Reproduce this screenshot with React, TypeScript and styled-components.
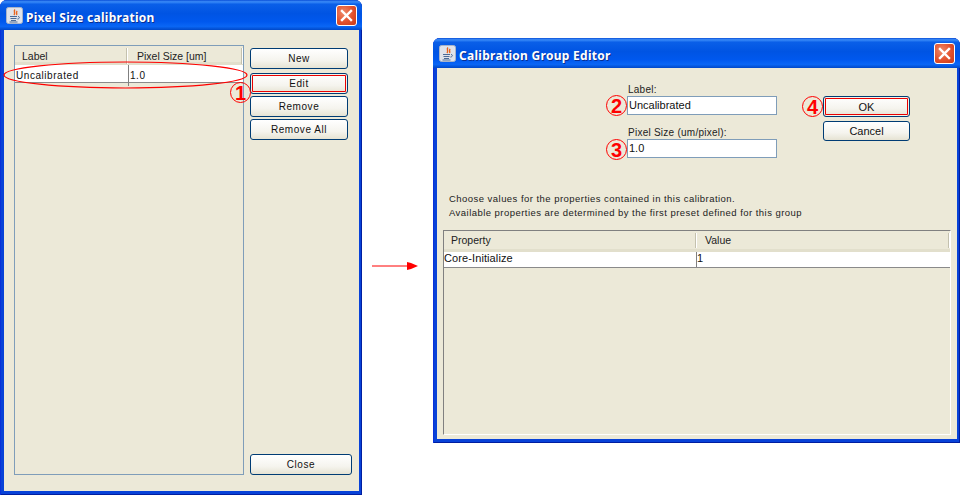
import React from "react";
import styled, { createGlobalStyle } from "styled-components";

const Global = createGlobalStyle`
  html, body { margin: 0; padding: 0; background: #fff; }
  body { font-family: "Liberation Sans", Arial, sans-serif; width: 961px; height: 495px; overflow: hidden; }
`;

const Page = styled.div`
  display: flex;
  align-items: flex-start;
  width: 961px;
  height: 495px;
  overflow: hidden;
`;

const Window = styled.div<{ $w: number; $h: number; $top?: number }>`
  position: relative;
  flex: none;
  box-sizing: border-box;
  width: ${(p) => p.$w}px;
  height: ${(p) => p.$h}px;
  margin-top: ${(p) => p.$top ?? 0}px;
  display: flex;
  flex-direction: column;
  padding: 0 3px 4px 4px;
  border-radius: 7px 7px 0 0;
  background: #0842d8;
  box-shadow: inset 1px 0 #0831d9, inset -1px 0 #001ea0, inset 0 -1px #001ea0;
`;

const TitleBar = styled.div`
  flex: none;
  height: 30px;
  margin: 0 -3px 0 -4px;
  padding: 0 5px 0 6px;
  border-radius: 7px 7px 0 0;
  display: flex;
  align-items: center;
  background: linear-gradient(180deg, #0a4fd8 0%, #3b8cf8 6%, #0a5fe8 14%, #0054e3 45%, #0058ee 72%, #0a66f5 88%, #0048c8 100%);
`;

const TitleText = styled.span`
  margin-left: 3px;
  padding-top: 4px;
  color: #fff;
  font-family: "Noto Sans", sans-serif;
  font-weight: 700;
  font-size: 12px;
  letter-spacing: 0.28px;
  text-shadow: 1px 1px 0 #0a2f90;
  white-space: nowrap;
`;

const CloseBtn = styled.div`
  margin-left: auto;
  width: 21px;
  height: 21px;
  box-sizing: border-box;
  border: 1px solid #fff;
  border-radius: 3px;
  background: radial-gradient(circle at 35% 35%, #ee8a6a, #e2502c 55%, #c63a18);
  display: flex;
  align-items: center;
  justify-content: center;
`;

const Body = styled.div`
  flex: 1;
  min-height: 0;
  background: #ece9d8;
  display: flex;
`;

const LeftBody = styled(Body)`
  padding: 15px 0 16px 10px;
`;

const RightBody = styled(Body)`
  flex-direction: column;
`;

const TableFrame = styled.div<{ $w: number; $h: number; $sunken?: boolean }>`
  flex: none;
  box-sizing: border-box;
  width: ${(p) => p.$w}px;
  height: ${(p) => p.$h}px;
  border: 1px solid ${(p) => (p.$sunken ? "#808080" : "#7f9db9")};
  border-right-color: ${(p) => (p.$sunken ? "#fff" : "#7f9db9")};
  border-bottom-color: ${(p) => (p.$sunken ? "#fff" : "#7f9db9")};
`;

const HeaderRow = styled.div<{ $cols: string; $h: number }>`
  display: grid;
  grid-template-columns: ${(p) => p.$cols};
  height: ${(p) => p.$h}px;
  box-sizing: border-box;
  border-bottom: 3px solid #e2dfcc;
  background: #ece9d8;
`;

const HeaderCell = styled.div<{ $pad: number; $lh: number }>`
  position: relative;
  padding-left: ${(p) => p.$pad}px;
  font-size: 10.5px;
  color: #222;
  line-height: ${(p) => p.$lh}px;
  white-space: nowrap;
  &::after {
    content: "";
    position: absolute;
    right: 1px;
    top: 2px;
    bottom: 2px;
    width: 1px;
    background: #c4c1ae;
    box-shadow: 1px 0 #fff;
  }
`;

const DataRow = styled.div<{ $cols: string; $h: number }>`
  display: grid;
  grid-template-columns: ${(p) => p.$cols};
  height: ${(p) => p.$h}px;
  box-sizing: border-box;
  background: #fff;
  border-bottom: 1px solid #8a8a8a;
`;

const DataCell = styled.div<{ $wide?: boolean }>`
  box-sizing: border-box;
  padding-left: ${(p) => (p.$wide ? 1 : 0)}px;
  border-right: 1px solid #808080;
  font-size: ${(p) => (p.$wide ? 10 : 11)}px;
  letter-spacing: ${(p) => (p.$wide ? 0.55 : 0.1)}px;
  line-height: ${(p) => (p.$wide ? 21 : 13)}px;
  color: #111;
  white-space: nowrap;
  &:last-child { border-right: none; }
`;

const ButtonColumn = styled.div`
  margin-left: 6px;
  padding-top: 3px;
  display: flex;
  flex-direction: column;
`;

const Button = styled.div<{ $w: number; $h?: number; $gap?: number; $focus?: boolean; $wide?: boolean }>`
  box-sizing: border-box;
  width: ${(p) => p.$w}px;
  height: ${(p) => p.$h ?? 21}px;
  margin-bottom: ${(p) => p.$gap ?? 0}px;
  border: 1px solid #003c74;
  border-radius: 3px;
  background: linear-gradient(180deg, #fff 0%, #f5f4ee 60%, #e6e3d3 100%);
  box-shadow: ${(p) => (p.$focus ? "inset 0 0 0 1px #f4f3ea, inset 0 0 0 2px #e80000" : "none")};
  display: flex;
  align-items: center;
  justify-content: center;
  font-size: ${(p) => (p.$wide ? 10 : 11)}px;
  letter-spacing: ${(p) => (p.$wide ? 0.55 : 0)}px;
  color: #111;
`;

const CloseAction = styled(Button)`
  margin-top: auto;
`;

const FormArea = styled.div`
  display: flex;
  align-items: flex-start;
  padding: 15px 0 0 190px;
`;

const Fields = styled.div`
  width: 150px;
  display: flex;
  flex-direction: column;
`;

const FieldLabel = styled.div<{ $top?: number }>`
  height: 13px;
  margin-top: ${(p) => p.$top ?? 0}px;
  padding-left: 1px;
  font-size: 10px;
  letter-spacing: 0.25px;
  line-height: 13px;
  color: #222;
  white-space: nowrap;
`;

const Field = styled.div`
  position: relative;
  box-sizing: border-box;
  height: 19px;
  border: 1px solid #7f9db9;
  background: #fff;
  padding-left: 1px;
  font-size: 11px;
  line-height: 17px;
  color: #111;
`;

const FormButtons = styled.div`
  position: relative;
  margin-left: 46px;
  padding-top: 13px;
  display: flex;
  flex-direction: column;
`;

const Notes = styled.div`
  margin: 34px 0 10px 12px;
  font-size: 9.5px;
  letter-spacing: 0.46px;
  line-height: 14px;
  color: #222;
  white-space: nowrap;
`;

const RightTableWrap = styled.div`
  margin-left: 6px;
`;

const Badge = styled.div<{ $left: number; $top: number }>`
  position: absolute;
  left: ${(p) => p.$left}px;
  top: ${(p) => p.$top}px;
  box-sizing: border-box;
  width: 21px;
  height: 21px;
  border: 1px solid #f00;
  border-radius: 50%;
  color: #f00;
  font-weight: 700;
  font-size: 20px;
  line-height: 20px;
  text-align: center;
  z-index: 3;
`;

const Oval = styled.svg`
  position: absolute;
  left: 3px;
  top: 59px;
  z-index: 2;
`;

const ArrowSvg = styled.svg`
  flex: none;
  margin: 260px 15px 0 10px;
`;

const JavaIcon = () => (
  <svg width="17" height="17" viewBox="0 0 17 17">
    <rect x="0.5" y="0.5" width="16" height="16" rx="2" fill="#dfe3ea" stroke="#a9b4c8" />
    <path d="M9 2.5c-2 2 1 3-1 5.5M11.2 4c-1.8 1.5.5 2-.8 4" stroke="#e8641c" strokeWidth="1.4" fill="none" />
    <path d="M4 9.5h7M4.5 11.5h6M5 13.5h5M3.5 15h8M12 9.5c2 0 2 2.2-.6 2.6" stroke="#4a6a96" strokeWidth="1" fill="none" />
  </svg>
);

const CloseGlyph = () => (
  <svg width="13" height="13" viewBox="0 0 13 13">
    <path d="M2 2l9 9M11 2l-9 9" stroke="#fff" strokeWidth="2.4" strokeLinecap="square" />
  </svg>
);

const Title = ({ text }: { text: string }) => (
  <TitleBar>
    <JavaIcon />
    <TitleText>{text}</TitleText>
    <CloseBtn>
      <CloseGlyph />
    </CloseBtn>
  </TitleBar>
);

export default function App() {
  return (
    <Page>
      <Global />
      <Window $w={362} $h={495}>
        <Title text="Pixel Size calibration" />
        <LeftBody>
          <TableFrame $w={230} $h={430}>
            <HeaderRow $cols="113px 1fr" $h={19}>
              <HeaderCell $pad={7} $lh={20}>Label</HeaderCell>
              <HeaderCell $pad={9} $lh={20}>Pixel Size [um]</HeaderCell>
            </HeaderRow>
            <DataRow $cols="114px 1fr" $h={18}>
              <DataCell $wide>Uncalibrated</DataCell>
              <DataCell $wide>1.0</DataCell>
            </DataRow>
          </TableFrame>
          <ButtonColumn>
            <Button $w={98} $gap={4} $wide>New</Button>
            <Button $w={98} $gap={2} $focus $wide>Edit</Button>
            <Button $w={98} $gap={2} $wide>Remove</Button>
            <Button $w={98} $wide>Remove All</Button>
            <CloseAction $w={102} $wide>Close</CloseAction>
          </ButtonColumn>
        </LeftBody>
        <Oval width="248" height="32" viewBox="0 0 248 32">
          <ellipse cx="122.5" cy="16" rx="121.5" ry="13" fill="none" stroke="#f00" strokeWidth="1.2" />
        </Oval>
        <Badge $left={230} $top={82}>1</Badge>
      </Window>

      <ArrowSvg width="46" height="12" viewBox="0 0 46 12">
        <path d="M0 6h36" stroke="#f00" strokeWidth="1" />
        <path d="M35 2l4 1 7 3-7 3-4 1z" fill="#f00" />
      </ArrowSvg>

      <Window $w={527} $h={405} $top={38}>
        <Title text="Calibration Group Editor" />
        <RightBody>
          <FormArea>
            <Fields>
              <FieldLabel>Label:</FieldLabel>
              <Field>
                Uncalibrated
                <Badge $left={-22} $top={-2}>2</Badge>
              </Field>
              <FieldLabel $top={11}>Pixel Size (um/pixel):</FieldLabel>
              <Field>
                1.0
                <Badge $left={-22} $top={-1}>3</Badge>
              </Field>
            </Fields>
            <FormButtons>
              <Button $w={87} $gap={4} $focus>OK</Button>
              <Button $w={87} $h={20}>Cancel</Button>
              <Badge $left={-21} $top={13}>4</Badge>
            </FormButtons>
          </FormArea>
          <Notes>
            Choose values for the properties contained in this calibration.
            <br />
            Available properties are determined by the first preset defined for this group
          </Notes>
          <RightTableWrap>
            <TableFrame $w={508} $h={205} $sunken>
              <HeaderRow $cols="253px 1fr" $h={21}>
                <HeaderCell $pad={7} $lh={19}>Property</HeaderCell>
                <HeaderCell $pad={8} $lh={19}>Value</HeaderCell>
              </HeaderRow>
              <DataRow $cols="253px 1fr" $h={16}>
                <DataCell>Core-Initialize</DataCell>
                <DataCell>1</DataCell>
              </DataRow>
            </TableFrame>
          </RightTableWrap>
        </RightBody>
      </Window>
    </Page>
  );
}
